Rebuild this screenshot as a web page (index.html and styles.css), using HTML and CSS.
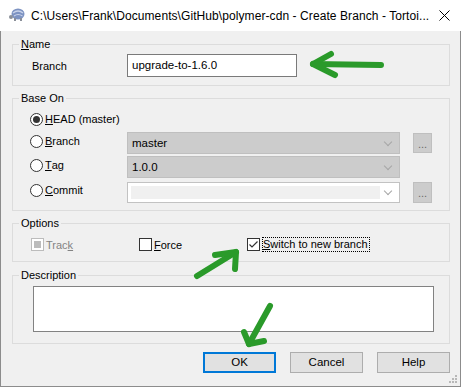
FILE: index.html
```html
<!DOCTYPE html>
<html>
<head>
  <title>Create Branch</title>
  <link rel="stylesheet" href="styles.css">
</head>
<body>
  <div class="window">
    <div class="titlebar">
      <svg class="app-icon" width="18" height="16" viewBox="0 0 18 16">
        <ellipse cx="10" cy="7" rx="6.5" ry="5.5" fill="#7d93c2"/>
        <path d="M5 6 Q10 2 15 6" stroke="#c9d3ea" stroke-width="1.3" fill="none"/>
        <path d="M6 9 Q10 6 14.5 9" stroke="#c9d3ea" stroke-width="1.1" fill="none"/>
        <circle cx="3" cy="10" r="2" fill="#8a8f99"/>
        <rect x="6" y="11" width="2" height="3" fill="#8a8f99"/>
        <rect x="12" y="11" width="2" height="3" fill="#8a8f99"/>
      </svg>
      <span class="title">C:\Users\Frank\Documents\GitHub\polymer-cdn - Create Branch - Tortoi...</span>
      <svg class="close" width="11" height="11" viewBox="0 0 11 11">
        <path d="M0.5 0.5 L10.5 10.5 M10.5 0.5 L0.5 10.5" stroke="#000" stroke-width="1"/>
      </svg>
    </div>

    <div class="dialog">
      <fieldset class="group group-name">
        <legend><u>N</u>ame</legend>
        <div class="name-row">
          <span class="field-label">Branch</span>
          <div class="textbox">upgrade-to-1.6.0</div>
        </div>
      </fieldset>

      <fieldset class="group group-base">
        <legend>Base On</legend>
        <div class="base-grid">
          <div class="choice first"><span class="radio checked"></span><u>H</u>EAD (master)</div>
          <div></div>
          <div></div>

          <div class="choice"><span class="radio"></span><u>B</u>ranch</div>
          <div class="combo disabled">master<span class="chevron"></span></div>
          <div class="browse">...</div>

          <div class="choice"><span class="radio"></span><u>T</u>ag</div>
          <div class="combo disabled">1.0.0<span class="chevron"></span></div>
          <div></div>

          <div class="choice last"><span class="radio"></span><u>C</u>ommit</div>
          <div class="combo editable last"><span class="combo-edit"></span><span class="chevron"></span></div>
          <div class="browse last">...</div>
        </div>
      </fieldset>

      <fieldset class="group group-options">
        <legend>Options</legend>
        <div class="options-row">
          <div class="option disabled"><span class="check partial"></span>Trac<u>k</u></div>
          <div class="option"><span class="check"></span><u>F</u>orce</div>
          <div class="option">
            <span class="check">
              <svg width="11" height="11" viewBox="0 0 11 11"><path d="M1.5 5.5 L4 8 L9.5 2.5" stroke="#333" stroke-width="1.2" fill="none"/></svg>
            </span>
            <span class="focused"><u>S</u>witch to new branch</span>
          </div>
        </div>
      </fieldset>

      <fieldset class="group group-desc">
        <legend>Description</legend>
        <div class="desc-box"></div>
      </fieldset>

      <div class="buttons">
        <div class="button default">OK</div>
        <div class="button">Cancel</div>
        <div class="button">Help</div>
      </div>

      <svg class="grip" width="9" height="9" viewBox="0 0 9 9">
        <rect x="6" y="0" width="2" height="2" fill="#b8b8b8"/>
        <rect x="6" y="3" width="2" height="2" fill="#b8b8b8"/>
        <rect x="3" y="3" width="2" height="2" fill="#b8b8b8"/>
        <rect x="6" y="6" width="2" height="2" fill="#b8b8b8"/>
        <rect x="3" y="6" width="2" height="2" fill="#b8b8b8"/>
        <rect x="0" y="6" width="2" height="2" fill="#b8b8b8"/>
      </svg>
    </div>

    <!-- hand-drawn hints over the dialog -->
    <svg class="arrows" width="461" height="387" viewBox="0 0 461 387">
      <g stroke="#2a9a2a" stroke-width="6" stroke-linecap="round" stroke-linejoin="round" fill="none">
        <path d="M381 65 L313 64"/>
        <path d="M313 64 L331 54 M313 64 L335 75"/>
        <path d="M197 276 L236 252"/>
        <path d="M236 252 L215 255 M236 252 L235 269"/>
        <path d="M270 306 L249 344"/>
        <path d="M249 344 L244 332 M249 344 L264 341"/>
      </g>
    </svg>
  </div>
</body>
</html>
```

FILE: styles.css
```css
body {
  margin: 0;
  padding: 0;
  font-family: "Liberation Sans", Arial, sans-serif;
  font-size: 11px;
  color: #000;
  background: #fff;
}
.window {
  position: relative;
  width: 461px;
  height: 387px;
  display: flex;
  flex-direction: column;
}
.titlebar {
  height: 31px;
  background: #fff;
  display: flex;
  align-items: center;
  padding-left: 8px;
  box-sizing: border-box;
}
.app-icon {
  margin-right: 5px;
  margin-top: -1px;
}
.title {
  font-size: 12px;
  letter-spacing: 0.08px;
  flex: 1;
  white-space: nowrap;
}
.close {
  margin-right: 11px;
}
.dialog {
  position: relative;
  flex: 1;
  background: #f0f0f0;
  border: 1px solid #8c8c8c;
  border-top: none;
  padding: 0 10px 0 11px;
}
.group {
  margin: 0;
  padding: 0;
  border: 1px solid #dcdcdc;
  min-inline-size: 0;
}
.group legend {
  padding: 0 2px;
  margin-left: 6px;
  line-height: 14px;
}
.group-name {
  margin-top: 6px;
}
.group-base,
.group-options {
  margin-top: 5px;
}
.group-desc {
  margin-top: 6px;
}
.name-row {
  display: flex;
  align-items: center;
  padding: 3px 0 8px 19px;
}
.field-label {
  width: 95px;
}
.textbox {
  width: 170px;
  height: 23px;
  box-sizing: border-box;
  border: 1px solid #7a7a7a;
  background: #fff;
  padding-left: 4px;
  line-height: 21px;
  font-size: 11.5px;
}
.base-grid {
  display: grid;
  grid-template-columns: 84px 273px 19px;
  grid-template-rows: 22px 22px 22px 23px;
  column-gap: 13px;
  row-gap: 2px;
  padding: 3px 0 7px 17px;
}
.choice {
  display: flex;
  align-items: center;
  height: 16px;
  margin-top: 1px;
  white-space: nowrap;
}
.choice.first {
  margin-top: 3px;
}
.choice.last {
  margin-top: 2px;
}
.radio {
  flex: none;
  width: 13px;
  height: 13px;
  box-sizing: border-box;
  border: 1px solid #333;
  border-radius: 50%;
  background: #fff;
  margin-right: 2px;
  display: flex;
  align-items: center;
  justify-content: center;
}
.radio.checked::after {
  content: "";
  width: 7px;
  height: 7px;
  border-radius: 50%;
  background: #333;
}
.combo {
  display: flex;
  align-items: center;
  justify-content: space-between;
  height: 22px;
  box-sizing: border-box;
  padding: 0 5px 0 4px;
  font-size: 11.5px;
}
.combo.disabled {
  background: #cccccc;
  border: 1px solid #bfbfbf;
}
.combo.editable {
  background: #fff;
  border: 1px solid #c2c2c2;
  padding-left: 3px;
}
.combo.last,
.browse.last {
  align-self: end;
  height: 21px;
}
.combo-edit {
  width: 249px;
  height: 13px;
  background: #f0f0f0;
}
.chevron {
  width: 5px;
  height: 5px;
  border-right: 1px solid #a6a6a6;
  border-bottom: 1px solid #a6a6a6;
  transform: rotate(45deg);
  margin: -3px 3px 0 0;
}
.browse {
  align-self: center;
  height: 20px;
  box-sizing: border-box;
  background: #cccccc;
  border: 1px solid #bfbfbf;
  color: #6a6a6a;
  text-align: center;
  font-size: 11px;
  line-height: 21px;
}
.options-row {
  display: flex;
  align-items: center;
  height: 17px;
  padding: 6px 0 8px 18px;
}
.option {
  display: flex;
  align-items: center;
  width: 108px;
  white-space: nowrap;
}
.option.disabled {
  color: #838383;
}
.check {
  flex: none;
  width: 13px;
  height: 13px;
  box-sizing: border-box;
  border: 1px solid #333;
  background: #fff;
  margin-right: 2px;
  display: flex;
  align-items: center;
  justify-content: center;
}
.option.disabled .check {
  border-color: #bcbcbc;
}
.check.partial::after {
  content: "";
  width: 7px;
  height: 7px;
  background: #bcbcbc;
}
.focused {
  border: 1px dotted #000;
  padding: 0 1px 0 0;
  line-height: 13px;
}
.desc-box {
  width: 401px;
  height: 46px;
  box-sizing: border-box;
  margin: 4px 0 11px 20px;
  border: 1px solid #828282;
  background: #fff;
}
.buttons {
  display: flex;
  justify-content: flex-end;
  gap: 14px;
  margin-top: 8px;
}
.button {
  width: 73px;
  height: 21px;
  box-sizing: border-box;
  border: 1px solid #adadad;
  background: #e1e1e1;
  text-align: center;
  line-height: 19px;
  font-size: 11.5px;
}
.button.default {
  border: 2px solid #0078d7;
  line-height: 17px;
}
.grip {
  position: absolute;
  right: 2px;
  bottom: 2px;
}
.arrows {
  position: absolute;
  top: 0;
  left: 0;
  pointer-events: none;
}
```
